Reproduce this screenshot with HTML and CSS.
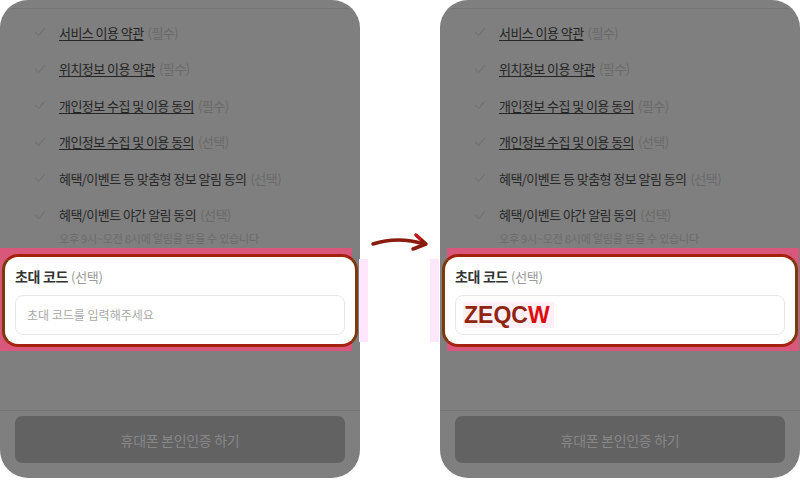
FILE: index.html
```html
<!DOCTYPE html>
<html>
    <head>
        <meta charset="utf-8">
        <link rel="stylesheet" href="styles.css">
    </head>
    <body>
    <div class="stage">
        <div class="phone">
            <div class="topline"></div>
            <div class="terms">
                <div class="term"><span class="check"><svg width="12" height="10" viewBox="0 0 12 10"><path d="M1 5 L4.5 8.5 L11 1" fill="none" stroke="#747474" stroke-width="1.2"/></svg></span><span class="link">서비스 이용 약관</span><span class="tag">(필수)</span></div>
                <div class="term"><span class="check"><svg width="12" height="10" viewBox="0 0 12 10"><path d="M1 5 L4.5 8.5 L11 1" fill="none" stroke="#747474" stroke-width="1.2"/></svg></span><span class="link">위치정보 이용 약관</span><span class="tag">(필수)</span></div>
                <div class="term"><span class="check"><svg width="12" height="10" viewBox="0 0 12 10"><path d="M1 5 L4.5 8.5 L11 1" fill="none" stroke="#747474" stroke-width="1.2"/></svg></span><span class="link">개인정보 수집 및 이용 동의</span><span class="tag">(필수)</span></div>
                <div class="term"><span class="check"><svg width="12" height="10" viewBox="0 0 12 10"><path d="M1 5 L4.5 8.5 L11 1" fill="none" stroke="#747474" stroke-width="1.2"/></svg></span><span class="link">개인정보 수집 및 이용 동의</span><span class="tag">(선택)</span></div>
                <div class="term"><span class="check"><svg width="12" height="10" viewBox="0 0 12 10"><path d="M1 5 L4.5 8.5 L11 1" fill="none" stroke="#747474" stroke-width="1.2"/></svg></span><span class="plain">혜택/이벤트 등 맞춤형 정보 알림 동의</span><span class="tag">(선택)</span></div>
                <div class="term-wrap">
                    <div class="term"><span class="check"><svg width="12" height="10" viewBox="0 0 12 10"><path d="M1 5 L4.5 8.5 L11 1" fill="none" stroke="#747474" stroke-width="1.2"/></svg></span><span class="plain">혜택/이벤트 야간 알림 동의</span><span class="tag">(선택)</span></div>
                    <div class="sub">오후 9시~오전 8시에 알림을 받을 수 있습니다</div>
                </div>
            </div>
            <div class="invite invite-left">
                <div class="invite-label">초대 코드 <span class="tag-light">(선택)</span></div>
                <div class="field"><span class="placeholder">초대 코드를 입력해주세요</span></div>
            </div>
            <div class="footer">
                <div class="verify">휴대폰 본인인증 하기</div>
            </div>
        </div>

        <div class="middle">
            <svg class="arrow" width="80" height="30" viewBox="0 0 80 30">
                <path d="M13 16 Q38 8 64 16" fill="none" stroke="#8a1c0e" stroke-width="3.5" stroke-linecap="round"/>
                <path d="M56 7 L66 16 L53 21" fill="none" stroke="#8a1c0e" stroke-width="3.5" stroke-linecap="round" stroke-linejoin="round"/>
                <path d="M56 7 L60 11" fill="none" stroke="#d4141a" stroke-width="2.5" stroke-linecap="round"/>
            </svg>
        </div>

        <div class="phone">
            <div class="topline"></div>
            <div class="terms">
                <div class="term"><span class="check"><svg width="12" height="10" viewBox="0 0 12 10"><path d="M1 5 L4.5 8.5 L11 1" fill="none" stroke="#747474" stroke-width="1.2"/></svg></span><span class="link">서비스 이용 약관</span><span class="tag">(필수)</span></div>
                <div class="term"><span class="check"><svg width="12" height="10" viewBox="0 0 12 10"><path d="M1 5 L4.5 8.5 L11 1" fill="none" stroke="#747474" stroke-width="1.2"/></svg></span><span class="link">위치정보 이용 약관</span><span class="tag">(필수)</span></div>
                <div class="term"><span class="check"><svg width="12" height="10" viewBox="0 0 12 10"><path d="M1 5 L4.5 8.5 L11 1" fill="none" stroke="#747474" stroke-width="1.2"/></svg></span><span class="link">개인정보 수집 및 이용 동의</span><span class="tag">(필수)</span></div>
                <div class="term"><span class="check"><svg width="12" height="10" viewBox="0 0 12 10"><path d="M1 5 L4.5 8.5 L11 1" fill="none" stroke="#747474" stroke-width="1.2"/></svg></span><span class="link">개인정보 수집 및 이용 동의</span><span class="tag">(선택)</span></div>
                <div class="term"><span class="check"><svg width="12" height="10" viewBox="0 0 12 10"><path d="M1 5 L4.5 8.5 L11 1" fill="none" stroke="#747474" stroke-width="1.2"/></svg></span><span class="plain">혜택/이벤트 등 맞춤형 정보 알림 동의</span><span class="tag">(선택)</span></div>
                <div class="term-wrap">
                    <div class="term"><span class="check"><svg width="12" height="10" viewBox="0 0 12 10"><path d="M1 5 L4.5 8.5 L11 1" fill="none" stroke="#747474" stroke-width="1.2"/></svg></span><span class="plain">혜택/이벤트 야간 알림 동의</span><span class="tag">(선택)</span></div>
                    <div class="sub">오후 9시~오전 8시에 알림을 받을 수 있습니다</div>
                </div>
            </div>
            <div class="invite invite-right">
                <div class="invite-label">초대 코드 <span class="tag-light">(선택)</span></div>
                <div class="field"><span class="code">ZEQC<span class="code-last">W</span></span></div>
            </div>
            <div class="footer">
                <div class="verify">휴대폰 본인인증 하기</div>
            </div>
        </div>
    </div>
    </body>
</html>
```

FILE: styles.css
```css
* {
    box-sizing: border-box;
}
body {
    margin: 0;
    background-color: white;
    font-family: "Noto Sans CJK KR", "Noto Sans", sans-serif;
}
.stage {
    display: flex;
    width: 800px;
    height: 480px;
}
.phone {
    position: relative;
    z-index: 0;
    width: 360px;
    height: 478px;
    background-color: #7f7f7f;
    border-radius: 28px;
    display: flex;
    flex-direction: column;
}
.topline {
    margin: 8px 12px 0;
    border-top: 1px solid #767676;
}
.terms {
    margin-top: 13px;
    display: flex;
    flex-direction: column;
    gap: 16.5px;
}
.term {
    height: 20px;
    display: flex;
    align-items: center;
    padding-left: 34px;
    font-size: 13px;
    letter-spacing: -0.55px;
}
.check {
    width: 12px;
    height: 10px;
    margin-right: 13px;
    display: flex;
}
.link {
    color: #252525;
    text-decoration: underline;
    text-underline-offset: 2px;
}
.plain {
    color: #282828;
}
.tag {
    color: #6a6a6a;
    margin-left: 4px;
}
.sub {
    margin-top: 5px;
    padding-left: 59px;
    height: 16px;
    line-height: 16px;
    font-size: 11px;
    letter-spacing: -0.2px;
    color: #6b6b6b;
}
.invite {
    position: relative;
    margin: 8px 2px 0;
    background-color: white;
    border: 3px solid;
    border-color: #a5210e #7c3a0b;
    border-radius: 16px;
    padding: 9px 10px 9px 10px;
}
.invite::before {
    content: "";
    position: absolute;
    z-index: -1;
    top: -9px;
    bottom: -7px;
    background-color: #d9577b;
}
.invite::after {
    content: "";
    position: absolute;
    top: 2px;
    bottom: 2px;
    width: 9px;
    background-color: #ffe6fb;
}
.invite-left::before {
    left: -5px;
    right: 3px;
}
.invite-left::after {
    right: -13px;
}
.invite-right::before {
    left: 2px;
    right: -4px;
}
.invite-right::after {
    left: -15px;
}
.invite-label {
    height: 20px;
    line-height: 20px;
    font-size: 14px;
    font-weight: bold;
    letter-spacing: -0.3px;
    color: #333;
}
.tag-light {
    font-weight: normal;
    font-size: 13px;
    color: #9a9a9a;
}
.field {
    margin-top: 9px;
    height: 40px;
    border: 1px solid #e6e6e6;
    border-radius: 8px;
    display: flex;
    align-items: center;
    padding-left: 11px;
}
.placeholder {
    font-size: 12px;
    color: #a9a9a9;
}
.code {
    margin-left: -4px;
    padding: 0 4px 0 1px;
    background-color: #fff0f8;
    font-family: "Liberation Sans", Arial, sans-serif;
    font-weight: bold;
    font-size: 23px;
    line-height: 26px;
    color: #8f2410;
}
.code-last {
    color: #de0d0d;
}
.footer {
    margin-top: auto;
    border-top: 1px solid #767676;
    padding: 5px 15px 15px;
}
.verify {
    height: 47px;
    border-radius: 7px;
    background-color: #626262;
    color: #878787;
    font-size: 14px;
    letter-spacing: -0.3px;
    display: flex;
    align-items: center;
    justify-content: center;
}
.middle {
    width: 80px;
}
.arrow {
    display: block;
    margin-top: 228px;
}
```
